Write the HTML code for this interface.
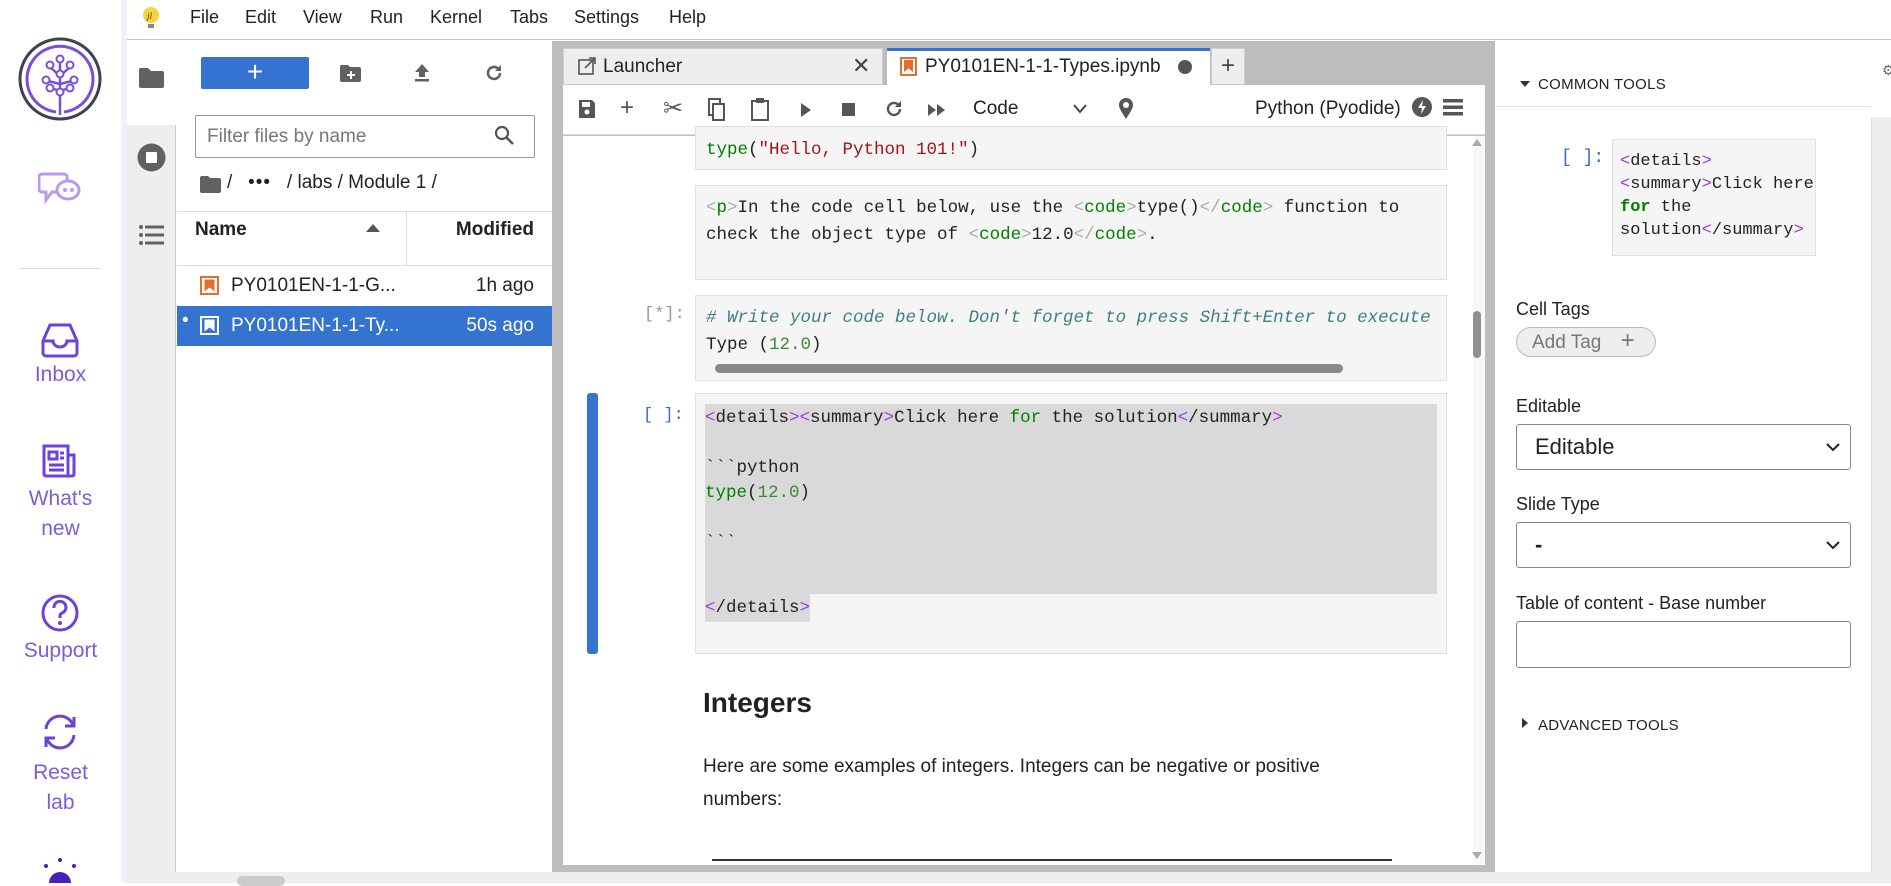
<!DOCTYPE html>
<html><head><meta charset="utf-8">
<style>
*{box-sizing:border-box;margin:0;padding:0}
body{width:1891px;height:883px;overflow:hidden;background:#fff;font-family:"Liberation Sans",sans-serif;position:relative;color:#222}
.a{position:absolute}
.mono{font-family:"Liberation Mono",monospace}
.side{color:#7a5ce0;font-size:21px;text-align:center;width:121px;left:0;line-height:30px}
.menu span{position:absolute;top:7px;font-size:18px;color:#222}
.code{position:absolute;left:695px;width:752px;background:#f5f5f5;border:1px solid #e0e0e0;font-family:"Liberation Mono",monospace;font-size:17.5px;line-height:26px;padding:0 10px;white-space:pre;overflow:hidden;color:#222}
.g{color:#008000}.gg{color:#3a8a3a}.r{color:#a31515}.p{color:#9a3ae0}.tg{color:#aaa}.cm{color:#408080;font-style:italic}
.lbl{position:absolute;left:1516px;font-size:18px;color:#222}
.sel{position:absolute;left:1516px;width:335px;height:46px;border:1px solid #888;border-radius:3px;background:#fff;font-size:22px;padding:9px 18px}
</style></head><body>
<div class="a" style="left:0;top:0;width:121px;height:883px;background:#fff"></div>
<div class="a" style="left:121px;top:0;width:6px;height:883px;background:#f1f1f7"></div>
<svg class="a" style="left:17px;top:36px" width="86" height="86" viewBox="0 0 86 86">
<circle cx="43" cy="43" r="40" fill="none" stroke="#3d4250" stroke-width="3"/>
<path d="M43 79 V40 M43 40 L33 31 M43 40 L53 31 M43 48 L31 45 M43 48 L55 45 M43 55 L34 52 M43 55 L52 52 M43 40 V26" stroke="#7a4fd8" stroke-width="2.5" fill="none"/>
<path d="M47 76 A33 33 0 1 0 39 76" stroke="#7a4fd8" stroke-width="3" fill="none"/>
<g fill="#fff" stroke="#7a4fd8" stroke-width="2"><circle cx="43" cy="23" r="3.5"/><circle cx="33" cy="29" r="3.5"/><circle cx="53" cy="29" r="3.5"/><circle cx="29" cy="44" r="3.5"/><circle cx="57" cy="44" r="3.5"/><circle cx="43" cy="38" r="3.5"/><circle cx="43" cy="56" r="3.5"/><circle cx="33" cy="52" r="3.5"/><circle cx="53" cy="52" r="3.5"/></g>
</svg>
<svg class="a" style="left:38px;top:168px" width="44" height="40" viewBox="0 0 44 40"><path d="M4 6 h22 a3 3 0 0 1 3 3 v12 a3 3 0 0 1-3 3 h-12 l-6 8 v-8 h-4 a3 3 0 0 1-3-3 v-12 a3 3 0 0 1 3-3z" fill="none" stroke="#b79af0" stroke-width="3"/><ellipse cx="30" cy="22" rx="11" ry="9" fill="#fff" stroke="#b79af0" stroke-width="3"/><circle cx="27" cy="22" r="2" fill="#b79af0"/><circle cx="34" cy="22" r="2" fill="#b79af0"/></svg>
<div class="a" style="left:19px;top:268px;width:82px;height:1px;background:#ddd"></div>
<svg class="a" style="left:40px;top:322px" width="40" height="36" viewBox="0 0 40 36"><path d="M10 3 h20 l7 16 v12 a3 3 0 0 1-3 3 h-28 a3 3 0 0 1-3-3 v-12z M3 19 h10 a7 6 0 0 0 14 0 h10" fill="none" stroke="#6b43d6" stroke-width="3"/></svg>
<div class="a side" style="top:360px">Inbox</div>
<svg class="a" style="left:41px;top:443px" width="38" height="36" viewBox="0 0 38 36"><path d="M3 3 h24 v30 h-22 a2 2 0 0 1-2-2z M27 12 h6 v19 a2 2 0 0 1-2 2 h-4 M8 9 h8 v7 h-8z M19 10 h4 M19 15 h4 M8 22 h15 M8 27 h15" fill="none" stroke="#6b43d6" stroke-width="3"/></svg>
<div class="a side" style="top:484px">What's<br>new</div>
<svg class="a" style="left:40px;top:593px" width="40" height="40" viewBox="0 0 40 40"><circle cx="20" cy="20" r="17" fill="none" stroke="#6b43d6" stroke-width="3"/><path d="M14 15 a6 6 0 1 1 8 5 c-2 1-2 2-2 5" fill="none" stroke="#6b43d6" stroke-width="3"/><circle cx="20" cy="30" r="2" fill="#6b43d6"/></svg>
<div class="a side" style="top:636px">Support</div>
<svg class="a" style="left:40px;top:712px" width="40" height="40" viewBox="0 0 40 40"><path d="M6 17 a14 14 0 0 1 27-4 M34 23 a14 14 0 0 1-27 4" fill="none" stroke="#6b43d6" stroke-width="3"/><path d="M34 5 v9 h-9 M6 35 v-9 h9" fill="none" stroke="#6b43d6" stroke-width="3"/></svg>
<div class="a side" style="top:758px">Reset<br>lab</div>
<svg class="a" style="left:35px;top:856px" width="50" height="27" viewBox="0 0 50 27"><circle cx="25" cy="27" r="11" fill="#4a1fc0"/><circle cx="25" cy="4" r="2" fill="#4a1fc0"/><circle cx="11" cy="10" r="2" fill="#4a1fc0"/><circle cx="39" cy="10" r="2" fill="#4a1fc0"/></svg>

<div class="a" style="left:127px;top:0;width:1764px;height:40px;background:#fff;border-bottom:1px solid #c8c8c8"></div>
<svg class="a" style="left:142px;top:6px" width="18" height="24" viewBox="0 0 18 24"><circle cx="9" cy="9" r="8" fill="#f5d43a"/><rect x="6" y="18" width="6" height="4" fill="#888"/><text x="5" y="13" font-size="9" font-style="italic" fill="#333" font-family="Liberation Serif">jl</text></svg>
<div class="menu"><span style="left:190px">File</span><span style="left:245px">Edit</span><span style="left:303px">View</span><span style="left:370px">Run</span><span style="left:430px">Kernel</span><span style="left:510px">Tabs</span><span style="left:574px">Settings</span><span style="left:669px">Help</span></div>

<div class="a" style="left:127px;top:41px;width:49px;height:831px;background:#eee;border-right:1px solid #ccc"></div>
<div class="a" style="left:127px;top:41px;width:49px;height:84px;background:#fff"></div>
<svg class="a" style="left:139px;top:68px" width="25" height="20" viewBox="0 0 25 20"><path d="M0 2 a2 2 0 0 1 2-2 h7 l3 3 h11 a2 2 0 0 1 2 2 v13 a2 2 0 0 1-2 2 h-21 a2 2 0 0 1-2-2z" fill="#616161"/></svg>
<svg class="a" style="left:137px;top:143px" width="29" height="29" viewBox="0 0 29 29"><circle cx="14.5" cy="14.5" r="14" fill="#616161"/><rect x="9" y="9" width="11" height="11" rx="1" fill="#fff"/></svg>
<svg class="a" style="left:139px;top:224px" width="25" height="22" viewBox="0 0 25 22"><g fill="#616161"><circle cx="2" cy="3" r="2"/><circle cx="2" cy="11" r="2"/><circle cx="2" cy="19" r="2"/><rect x="6" y="1.5" width="19" height="3"/><rect x="6" y="9.5" width="19" height="3"/><rect x="6" y="17.5" width="19" height="3"/></g></svg>

<div class="a" style="left:177px;top:41px;width:375px;height:831px;background:#fff"></div>
<div class="a" style="left:201px;top:57px;width:108px;height:32px;background:#3473d0;border-radius:2px;color:#fff;font-size:28px;text-align:center;line-height:30px">+</div>
<svg class="a" style="left:340px;top:65px" width="21" height="17" viewBox="0 0 21 17"><path d="M0 2 a2 2 0 0 1 2-2 h6 l2 2 h9 a2 2 0 0 1 2 2 v11 a2 2 0 0 1-2 2 h-17 a2 2 0 0 1-2-2z" fill="#616161"/><path d="M11 6 v8 M7 10 h8" stroke="#fff" stroke-width="2"/></svg>
<svg class="a" style="left:414px;top:63px" width="16" height="20" viewBox="0 0 16 20"><path d="M8 1 L15 9 H11 V14 H5 V9 H1z" fill="#616161"/><rect x="1" y="16" width="14" height="2.5" fill="#616161"/></svg>
<svg class="a" style="left:484px;top:63px" width="20" height="20" viewBox="0 0 20 20"><path d="M16 10 a6 6 0 1 1-2-4.5" fill="none" stroke="#616161" stroke-width="2.6"/><path d="M17 2 v6 h-6z" fill="#616161"/></svg>
<div class="a" style="left:195px;top:115px;width:340px;height:43px;border:1px solid #999;border-radius:2px;font-size:19px;color:#777;padding:10px 11px">Filter files by name</div>
<svg class="a" style="left:494px;top:125px" width="21" height="21" viewBox="0 0 21 21"><circle cx="8" cy="8" r="6" fill="none" stroke="#555" stroke-width="2.2"/><path d="M12.5 12.5 L19 19" stroke="#555" stroke-width="2.5"/></svg>
<svg class="a" style="left:200px;top:176px" width="21" height="17" viewBox="0 0 21 17"><path d="M0 2 a2 2 0 0 1 2-2 h6 l2 2 h9 a2 2 0 0 1 2 2 v11 a2 2 0 0 1-2 2 h-17 a2 2 0 0 1-2-2z" fill="#616161"/></svg>
<div class="a" style="left:227px;top:172px;font-size:19px;color:#222;white-space:pre">/   <span style="letter-spacing:1px">•••</span>   / labs / Module 1 /</div>
<div class="a" style="left:177px;top:211px;width:375px;height:1px;background:#ddd"></div>
<div class="a" style="left:177px;top:265px;width:375px;height:1px;background:#ddd"></div>
<div class="a" style="left:406px;top:211px;width:1px;height:54px;background:#ddd"></div>
<div class="a" style="left:195px;top:219px;font-size:19px;font-weight:bold">Name</div>
<svg class="a" style="left:366px;top:223px" width="14" height="9"><path d="M0 9 L7 1 L14 9z" fill="#555"/></svg>
<div class="a" style="left:450px;top:219px;font-size:19px;font-weight:bold;width:84px;text-align:right">Modified</div>
<svg class="a" style="left:200px;top:276px" width="19" height="19" viewBox="0 0 19 19"><rect x="1" y="1" width="17" height="17" fill="#fff" stroke="#e46e2e" stroke-width="2"/><path d="M4.5 3.5 h10 v12 l-5-4 l-5 4z" fill="#e46e2e"/></svg>
<div class="a" style="left:231px;top:275px;font-size:19px">PY0101EN-1-1-G...</div>
<div class="a" style="left:450px;top:275px;font-size:19px;width:84px;text-align:right">1h ago</div>
<div class="a" style="left:177px;top:306px;width:375px;height:40px;background:#3473d0"></div>
<div class="a" style="left:182px;top:310px;font-size:19px;color:#fff">•</div>
<svg class="a" style="left:200px;top:316px" width="19" height="19" viewBox="0 0 19 19"><rect x="1" y="1" width="17" height="17" fill="none" stroke="#fff" stroke-width="2"/><path d="M4.5 3.5 h10 v12 l-5-4 l-5 4z" fill="#fff"/></svg>
<div class="a" style="left:231px;top:315px;font-size:19px;color:#fff">PY0101EN-1-1-Ty...</div>
<div class="a" style="left:440px;top:315px;font-size:19px;width:94px;text-align:right;color:#fff">50s ago</div>

<div class="a" style="left:552px;top:41px;width:943px;height:831px;background:#bdbdbd"></div>
<div class="a" style="left:563px;top:48px;width:320px;height:37px;background:#eee;border:1px solid #ccc"></div>
<svg class="a" style="left:578px;top:57px" width="18" height="18" viewBox="0 0 18 18"><rect x="1" y="3" width="14" height="14" fill="none" stroke="#555" stroke-width="1.6"/><path d="M7 11 L17 1 M11 1 h6 v6" fill="none" stroke="#555" stroke-width="1.6"/></svg>
<div class="a" style="left:603px;top:56px;font-size:19px">Launcher</div>
<div class="a" style="left:852px;top:53px;font-size:22px;color:#444">✕</div>
<div class="a" style="left:887px;top:48px;width:323px;height:38px;background:#fff;border-top:3px solid #3473d0"></div>
<svg class="a" style="left:900px;top:57px" width="17" height="19" viewBox="0 0 17 19"><rect x="1" y="1" width="15" height="17" fill="#fff" stroke="#e46e2e" stroke-width="2"/><path d="M4 3 h9 v12 l-4.5-3.5 l-4.5 3.5z" fill="#e46e2e"/></svg>
<div class="a" style="left:925px;top:56px;font-size:19px">PY0101EN-1-1-Types.ipynb</div>
<div class="a" style="left:1178px;top:60px;width:14px;height:14px;border-radius:7px;background:#555"></div>
<div class="a" style="left:1211px;top:48px;width:34px;height:37px;background:#eee;border:1px solid #ccc;font-size:24px;text-align:center;line-height:34px;color:#444">+</div>
<div class="a" style="left:563px;top:85px;width:922px;height:50px;background:#fff;border-bottom:1px solid #ddd"></div>
<svg class="a" style="left:578px;top:99px" width="18" height="20" viewBox="0 0 18 20"><path d="M1 1 h13 l3 3 v15 h-16z" fill="#555"/><rect x="4" y="3" width="8" height="5" fill="#fff"/><circle cx="9" cy="13" r="2.5" fill="#fff"/></svg>
<div class="a" style="left:620px;top:94px;font-size:24px;color:#555">+</div>
<div class="a" style="left:663px;top:94px;font-size:24px;color:#555">✂</div>
<svg class="a" style="left:708px;top:98px" width="18" height="24" viewBox="0 0 18 24"><rect x="1" y="1" width="11" height="16" fill="none" stroke="#555" stroke-width="2"/><rect x="5" y="6" width="11" height="16" fill="#fff" stroke="#555" stroke-width="2"/></svg>
<svg class="a" style="left:751px;top:97px" width="18" height="24" viewBox="0 0 18 24"><rect x="1" y="4" width="16" height="19" fill="none" stroke="#555" stroke-width="2"/><rect x="5" y="1" width="8" height="5" fill="#555"/></svg>
<svg class="a" style="left:800px;top:102px" width="12" height="16"><path d="M1 1 L11 8 L1 15z" fill="#555"/></svg>
<div class="a" style="left:842px;top:103px;width:13px;height:13px;background:#555"></div>
<svg class="a" style="left:884px;top:99px" width="20" height="20" viewBox="0 0 20 20"><path d="M16 10 a6 6 0 1 1-2-4.5" fill="none" stroke="#555" stroke-width="2.4"/><path d="M17 2 v6 h-6z" fill="#555"/></svg>
<svg class="a" style="left:927px;top:103px" width="20" height="14"><path d="M1 1 L9 7 L1 13z M10 1 L18 7 L10 13z" fill="#555"/></svg>
<div class="a" style="left:973px;top:98px;font-size:19px">Code</div>
<svg class="a" style="left:1073px;top:104px" width="14" height="10"><path d="M1 1 L7 8 L13 1" fill="none" stroke="#444" stroke-width="2"/></svg>
<svg class="a" style="left:1118px;top:97px" width="16" height="24" viewBox="0 0 16 24"><path d="M8 22 C3 14 1 11 1 8 a7 7 0 0 1 14 0 c0 3-2 6-7 14z" fill="#555"/><circle cx="8" cy="8" r="3" fill="#fff"/></svg>
<div class="a" style="left:1255px;top:98px;font-size:19px">Python (Pyodide)</div>
<svg class="a" style="left:1411px;top:96px" width="22" height="22" viewBox="0 0 22 22"><circle cx="11" cy="11" r="10" fill="#555"/><path d="M12 4 L7 12 h4 l-1 6 l5-8 h-4z" fill="#fff"/></svg>
<svg class="a" style="left:1443px;top:99px" width="20" height="17"><g fill="#555"><rect y="0" width="20" height="3.5"/><rect y="6.5" width="20" height="3.5"/><rect y="13" width="20" height="3.5"/></g></svg>

<div class="a" style="left:563px;top:136px;width:922px;height:729px;background:#fff;overflow:hidden"></div>
<div class="code" style="top:126px;height:44px;padding-top:10px"><span class="g">type</span>(<span class="r">"Hello, Python 101!"</span>)</div>
<div class="code" style="top:185px;height:95px;padding-top:9px;line-height:27px"><span class="tg">&lt;</span><span class="g">p</span><span class="tg">&gt;</span>In the code cell below, use the <span class="tg">&lt;</span><span class="g">code</span><span class="tg">&gt;</span>type()<span class="tg">&lt;/</span><span class="g">code</span><span class="tg">&gt;</span> function to
check the object type of <span class="tg">&lt;</span><span class="g">code</span><span class="tg">&gt;</span>12.0<span class="tg">&lt;/</span><span class="g">code</span><span class="tg">&gt;</span>.</div>
<div class="a mono" style="left:644px;top:305px;font-size:17px;color:#999">[*]:</div>
<div class="code" style="top:295px;height:86px;padding-top:9px;line-height:27px"><span class="cm"># Write your code below. Don't forget to press Shift+Enter to execute</span>
Type (<span class="gg">12.0</span>)</div>
<div class="a" style="left:715px;top:364px;width:628px;height:9px;border-radius:5px;background:#8a8a8a"></div>
<div class="a" style="left:587px;top:393px;width:11px;height:261px;border-radius:3px;background:#3473d0"></div>
<div class="a mono" style="left:643px;top:406px;font-size:17px;color:#3f6db5">[ ]:</div>
<div class="code" style="top:393px;height:261px;padding:10px 9px 0 9px"><div style="background:#d9d9d9;height:190px;line-height:25px;padding-top:2px"><span class="p">&lt;</span>details<span class="p">&gt;&lt;</span>summary<span class="p">&gt;</span>Click here <span class="g">for</span> the solution<span class="p">&lt;</span>/summary<span class="p">&gt;</span>

&#96;&#96;&#96;python
<span class="g">type</span>(<span class="gg">12.0</span>)

&#96;&#96;&#96;
</div><span style="background:#d9d9d9;display:inline-block;line-height:28px"><span class="p">&lt;</span>/details<span class="p">&gt;</span></span></div>
<div class="a" style="left:703px;top:687px;font-size:28px;font-weight:bold;color:#222">Integers</div>
<div class="a" style="left:703px;top:750px;font-size:19px;line-height:33px;color:#222">Here are some examples of integers. Integers can be negative or positive<br>numbers:</div>
<div class="a" style="left:712px;top:859px;width:680px;height:2px;background:#333"></div>
<div class="a" style="left:1473px;top:136px;width:12px;height:729px;background:#f8f8f8"></div>
<div class="a" style="left:1473px;top:311px;width:8px;height:47px;border-radius:4px;background:#909090"></div>
<svg class="a" style="left:1471px;top:137px" width="12" height="10"><path d="M1 9 L6 2 L11 9z" fill="#aaa"/></svg>
<svg class="a" style="left:1471px;top:851px" width="12" height="10"><path d="M1 1 L6 8 L11 1z" fill="#aaa"/></svg>

<div class="a" style="left:1495px;top:41px;width:376px;height:831px;background:#fff"></div>
<div class="a" style="left:1495px;top:106px;width:376px;height:1px;background:#e0e0e0"></div>
<svg class="a" style="left:1520px;top:81px" width="10" height="7"><path d="M0 0 L10 0 L5 6z" fill="#333"/></svg>
<div class="a" style="left:1538px;top:76px;font-size:15px;color:#222;letter-spacing:.3px">COMMON TOOLS</div>
<div class="a mono" style="left:1561px;top:148px;font-size:18px;color:#3f6db5">[ ]:</div>
<div class="a mono" style="left:1612px;top:139px;width:204px;height:117px;background:#f5f5f5;border:1px solid #e0e0e0;font-size:17px;line-height:23px;padding:10px 7px;white-space:pre;color:#222"><span class="p">&lt;</span>details<span class="p">&gt;</span>
<span class="p">&lt;</span>summary<span class="p">&gt;</span>Click here
<span class="g" style="font-weight:bold">for</span> the
solution<span class="p">&lt;</span>/summary<span class="p">&gt;</span></div>
<div class="lbl" style="top:299px">Cell Tags</div>
<div class="a" style="left:1516px;top:327px;width:140px;height:30px;border:1px solid #bbb;border-radius:15px;background:#eee;font-size:19px;color:#777;padding:3px 15px">Add Tag <span style="margin-left:14px;font-size:24px;line-height:20px">+</span></div>
<div class="lbl" style="top:396px">Editable</div>
<div class="sel" style="top:424px">Editable</div>
<div class="lbl" style="top:494px">Slide Type</div>
<div class="sel" style="top:522px;font-weight:bold">-</div>
<svg class="a" style="left:1826px;top:443px" width="14" height="9"><path d="M1 1 L7 7 L13 1" fill="none" stroke="#222" stroke-width="2"/></svg>
<svg class="a" style="left:1826px;top:541px" width="14" height="9"><path d="M1 1 L7 7 L13 1" fill="none" stroke="#222" stroke-width="2"/></svg>
<div class="lbl" style="top:593px">Table of content - Base number</div>
<div class="a" style="left:1516px;top:621px;width:335px;height:47px;border:1px solid #888;border-radius:3px"></div>
<svg class="a" style="left:1522px;top:718px" width="7" height="10"><path d="M0 0 L6 5 L0 10z" fill="#333"/></svg>
<div class="a" style="left:1538px;top:717px;font-size:15px;color:#222;letter-spacing:.3px">ADVANCED TOOLS</div>
<div class="a" style="left:1871px;top:41px;width:20px;height:831px;background:#eee;border-left:1px solid #ddd"></div>
<div class="a" style="left:1871px;top:41px;width:20px;height:76px;background:#fff"></div>
<div class="a" style="left:1882px;top:62px;font-size:14px;color:#666">⚙</div>

<div class="a" style="left:127px;top:872px;width:1764px;height:11px;background:#eee"></div>
<div class="a" style="left:237px;top:876px;width:48px;height:10px;border-radius:6px;background:#ccc"></div>
</body></html>
